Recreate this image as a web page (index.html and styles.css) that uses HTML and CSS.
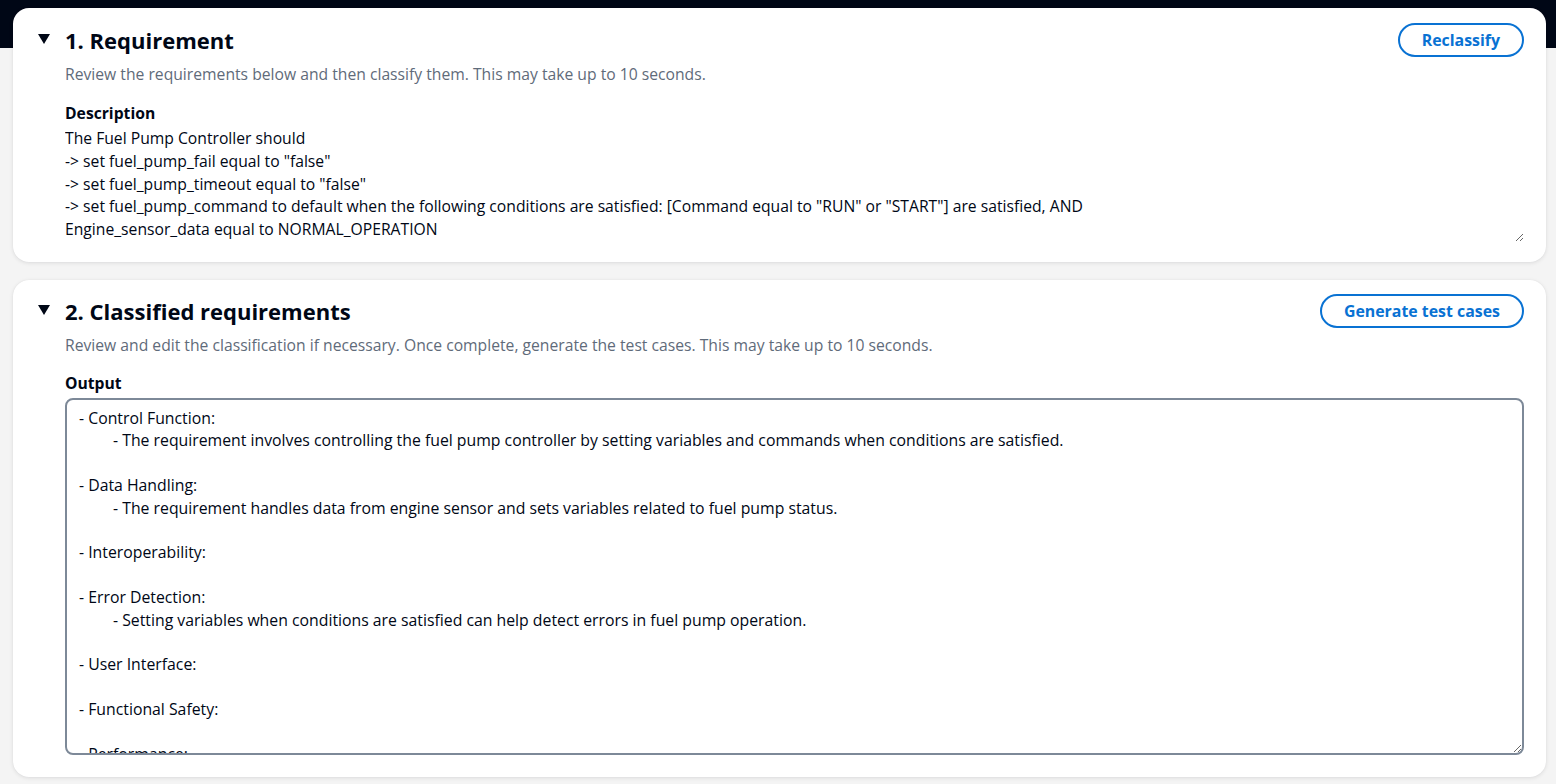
FILE: index.html
```html
<!DOCTYPE html>
<html lang="en">
<head>
<meta charset="utf-8">
<title>Requirements</title>
<link rel="stylesheet" href="styles.css">
</head>
<body>
<main class="page">
  <section class="card card-req">
    <div class="card-head">
      <div class="head-title">
        <svg class="caret" width="12" height="10" viewBox="0 0 12 10"><polygon points="0,0 12,0 6,10" fill="#000716"/></svg>
        <h2>1. Requirement</h2>
      </div>
      <button class="btn">Reclassify</button>
    </div>
    <div class="card-body">
      <p class="sub">Review the requirements below and then classify them. This may take up to 10 seconds.</p>
      <label class="field-label" for="desc">Description</label>
      <textarea id="desc" class="plain-area">The Fuel Pump Controller should
-> set fuel_pump_fail equal to "false"
-> set fuel_pump_timeout equal to "false"
-> set fuel_pump_command to default when the following conditions are satisfied: [Command equal to "RUN" or "START"] are satisfied, AND
Engine_sensor_data equal to NORMAL_OPERATION</textarea>
    </div>
  </section>

  <section class="card card-class">
    <div class="card-head">
      <div class="head-title">
        <svg class="caret" width="12" height="10" viewBox="0 0 12 10"><polygon points="0,0 12,0 6,10" fill="#000716"/></svg>
        <h2>2. Classified requirements</h2>
      </div>
      <button class="btn">Generate test cases</button>
    </div>
    <div class="card-body">
      <p class="sub">Review and edit the classification if necessary. Once complete, generate the test cases. This may take up to 10 seconds.</p>
      <label class="field-label" for="out">Output</label>
      <textarea id="out" class="box-area">- Control Function:
	- The requirement involves controlling the fuel pump controller by setting variables and commands when conditions are satisfied.

- Data Handling:
	- The requirement handles data from engine sensor and sets variables related to fuel pump status.

- Interoperability:

- Error Detection:
	- Setting variables when conditions are satisfied can help detect errors in fuel pump operation.

- User Interface:

- Functional Safety:

- Performance:

- Security:</textarea>
    </div>
  </section>
</main>
</body>
</html>
```

FILE: styles.css
```css
* { box-sizing: border-box; }

html, body {
  margin: 0;
  height: 100%;
}

body {
  background: linear-gradient(#000716 0, #000716 48px, #f4f4f4 48px);
  font-family: "Open Sans", "Noto Sans", sans-serif;
  color: #000716;
  overflow: hidden;
}

.page {
  display: flex;
  flex-direction: column;
  gap: 18px;
  padding: 8px 10px 0 13px;
}

.card {
  background: #ffffff;
  border-radius: 16px;
  box-shadow: 0 1px 4px rgba(0, 7, 22, 0.10), 0 0 1px rgba(0, 7, 22, 0.08);
  padding: 15px 22px 20px 25px;
}

.card-class {
  padding-top: 14px;
  padding-bottom: 22px;
}

.card-head {
  display: flex;
  justify-content: space-between;
  align-items: center;
  height: 34px;
}

.head-title {
  display: flex;
  align-items: center;
  gap: 15px;
}

.caret {
  display: block;
  margin-top: -2px;
}

h2 {
  margin: 0;
  font-size: 22px;
  font-weight: 700;
  line-height: 34px;
}

.btn {
  font-family: "Open Sans", "Noto Sans", sans-serif;
  font-size: 15.9px;
  font-weight: 700;
  color: #0972d3;
  background: #ffffff;
  border: 2px solid #0972d3;
  border-radius: 20px;
  height: 34px;
  padding: 0 22px;
  line-height: 30px;
  cursor: pointer;
}

.card-body {
  padding-left: 27px;
}

.sub {
  margin: 6px 0 0;
  font-size: 15.7px;
  line-height: 22px;
  color: #5f6b7a;
}

.field-label {
  display: block;
  margin-top: 17px;
  font-size: 15.7px;
  font-weight: 700;
  line-height: 22px;
}

.plain-area {
  display: block;
  width: 100%;
  height: 115px;
  margin-top: 3px;
  border: none;
  padding: 0;
  font-family: "Open Sans", "Noto Sans", sans-serif;
  font-size: 15.7px;
  line-height: 22.75px;
  color: #000716;
  background: transparent;
  resize: vertical;
  outline: none;
  overflow: hidden;
}

.card-class .field-label {
  margin-top: 16px;
}

.box-area {
  display: block;
  width: 100%;
  height: 357px;
  margin-top: 4px;
  border: 2px solid #7d8998;
  border-radius: 8px;
  padding: 7px 12px;
  font-family: "Open Sans", "Noto Sans", sans-serif;
  font-size: 15.8px;
  line-height: 22.4px;
  color: #000716;
  background: #ffffff;
  tab-size: 34px;
  resize: vertical;
  outline: none;
  overflow: hidden;
}
```
